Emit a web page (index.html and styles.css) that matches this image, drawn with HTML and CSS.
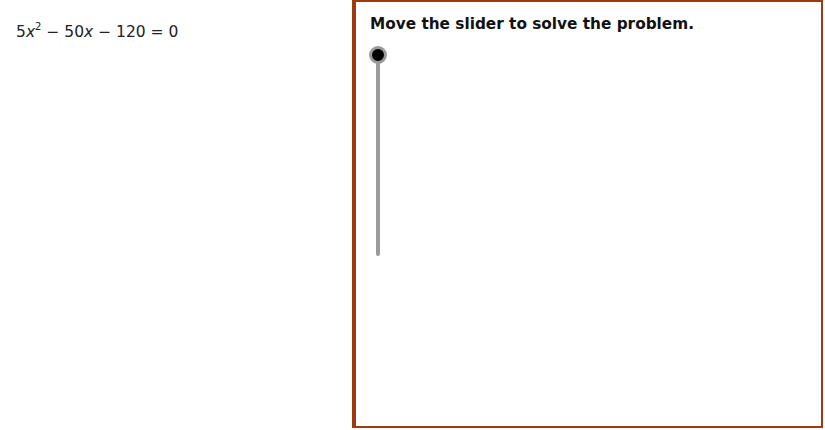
FILE: index.html
```html
<!DOCTYPE html>
<html>
<head>
<meta charset="utf-8">
<link rel="stylesheet" href="styles.css">
</head>
<body>
<div class="page">
  <div class="left">
    <div class="eq">5<i>x</i><sup>2</sup> <span class="op">−</span> 50<i>x</i> <span class="op">−</span> 120 <span class="op">=</span> 0</div>
  </div>
  <div class="panel">
    <div class="title">Move the slider to solve the problem.</div>
    <div class="slider">
      <div class="track"></div>
      <div class="knob"></div>
    </div>
  </div>
</div>
</body>
</html>
```
FILE: styles.css
```css
html, body {
  margin: 0;
  padding: 0;
  background: #ffffff;
}
.page {
  display: flex;
  width: 825px;
  height: 430px;
}
.left {
  width: 352px;
  flex: none;
  padding: 23px 0 0 16px;
  box-sizing: border-box;
}
.eq {
  font-family: "DejaVu Sans", sans-serif;
  font-size: 15.5px;
  color: #222;
  word-spacing: 0;
}
.eq i {
  font-style: italic;
}
.eq sup {
  font-size: 10px;
  vertical-align: 7px;
  line-height: 0;
}
.panel {
  width: 471px;
  height: 428px;
  box-sizing: border-box;
  border-style: solid;
  border-color: #9e3a0b;
  border-width: 2px 2px 2px 4px;
  padding: 12px 0 0 14px;
  position: relative;
}
.title {
  font-family: "DejaVu Sans", sans-serif;
  font-weight: bold;
  font-size: 15.3px;
  color: #111;
  line-height: 20px;
}
.slider {
  position: relative;
  width: 20px;
  height: 212px;
  margin-top: 12px;
  margin-left: -2px;
}
.track {
  position: absolute;
  left: 8px;
  top: 8px;
  width: 4px;
  height: 202px;
  border-radius: 2px;
  background: #9a9a9a;
}
.knob {
  position: absolute;
  left: 1px;
  top: 0;
  width: 12px;
  height: 12px;
  border-radius: 50%;
  background: #000;
  border: 3px solid #9a9a9a;
  box-sizing: content-box;
}
```
